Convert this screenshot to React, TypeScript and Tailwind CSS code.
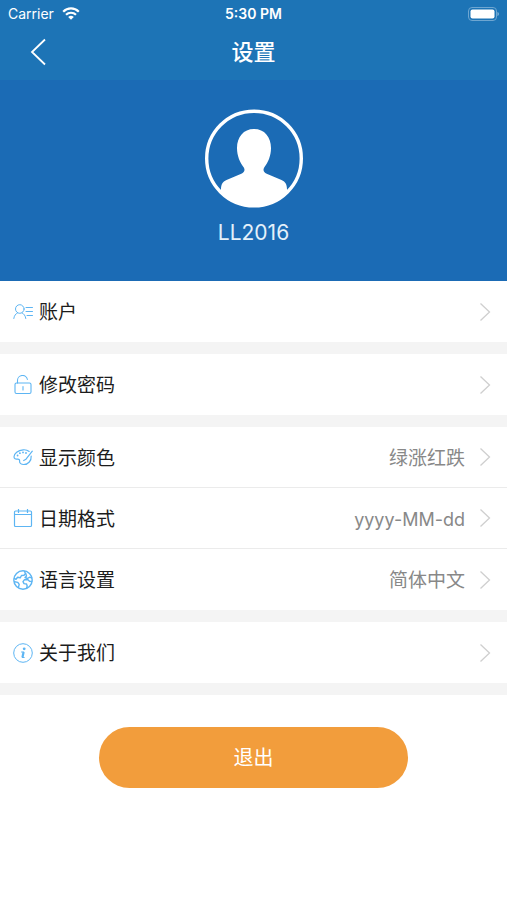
import React from "react";

type Item = {
  label: string;
  value?: string;
  valueClass?: string;
  icon: React.ReactNode;
};

const iconClass = "w-5 h-5 shrink-0 text-[#5db5f3]";

const AccountIcon = () => (
  <svg className={iconClass} viewBox="0 0 20 20" fill="none" stroke="currentColor" strokeWidth="1" strokeLinecap="round">
    <circle cx="6.800" cy="7" r="4.300" />
    <path d="M.8 16.500c.4-2.800 1.800-4.700 3.800-5.700M9 10.800c2 1 3.400 2.900 3.800 5.700" />
    <path d="M13 5.500h6.500M13 9.500h6.500M14 13.500h5.500" />
  </svg>
);

const LockIcon = () => (
  <svg className={iconClass} viewBox="0 0 20 20" fill="none" stroke="currentColor" strokeWidth="1.100" strokeLinecap="round">
    <rect x="2" y="8" width="16" height="10.500" rx="1.500" />
    <path d="M4.500 8V5.700a5 5 0 0 1 9.900-1.200M10 11.500v3.500" />
  </svg>
);

const PaletteIcon = () => (
  <svg className={iconClass} viewBox="0 0 20 20" fill="none" stroke="currentColor" strokeWidth="1.200" strokeLinecap="round" strokeLinejoin="round">
    <path d="M16.200 4.400C14.600 3.200 12.500 2.600 10.200 2.800 5 3.200 1 6.400 1 9.800c0 2 1.700 2.700 3.400 2.300 1.500-.3 2.400.6 2.200 2-.3 2.200 1.600 3.400 4.200 3.400 4.500 0 7.700-3.800 7.400-8.500" />
    <path d="M19.300 4.200 13 12.200l-2.300 1.300" />
    <path d="M4.600 8.400v.1M6.900 6.100v.1M10 5.300v.1M13 6v.1" strokeWidth="1.800" />
  </svg>
);

const CalendarIcon = () => (
  <svg className={iconClass} viewBox="0 0 20 20" fill="none" stroke="currentColor" strokeWidth="1.200">
    <rect x="1.500" y="3" width="17" height="15.500" rx="1" />
    <path d="M1.500 6.500h17M5.500 1v4M14.500 1v4" />
  </svg>
);

const GlobeIcon = () => (
  <svg className={iconClass} viewBox="0 0 20 20" fill="none" stroke="currentColor" strokeWidth="1.400" strokeLinejoin="round" strokeLinecap="round">
    <circle cx="10" cy="10" r="9.200" />
    <path d="M1.300 8.300 3 9.300l1.600-2 2.600.5 1.300-2.300 2.500-.3 1.500-1.700-1-2" />
    <path d="M12.800 3.800l.7 2.200-1.500 1.500 2.500 1 2.300-1.300 2 .8" />
    <path d="M18.800 11.500l-2.300-.3-1.500-1.400-3.500-.2-1.500 2 1 2 2.500.4.700 2-.6 2" />
    <path d="M1.500 11.800l3.300.6 1.400 2-.7 2.800" />
  </svg>
);

const InfoIcon = () => (
  <svg className={iconClass} viewBox="0 0 20 20" fill="none" stroke="currentColor">
    <circle cx="10" cy="10" r="9.300" strokeWidth="1" />
    <circle cx="11.200" cy="5.800" r="1.400" fill="currentColor" stroke="none" />
    <path d="M10.600 9 9.400 14.500" strokeWidth="2.200" />
    <path d="M8.500 9h2.200M9.400 14.500h1.800" strokeWidth="1" strokeLinecap="round" />
  </svg>
);

const groups: Item[][] = [
  [{ label: "账户", icon: <AccountIcon /> }],
  [{ label: "修改密码", icon: <LockIcon /> }],
  [
    { label: "显示颜色", value: "绿涨红跌", icon: <PaletteIcon /> },
    { label: "日期格式", value: "yyyy-MM-dd", valueClass: "text-lg", icon: <CalendarIcon /> },
    { label: "语言设置", value: "简体中文", icon: <GlobeIcon /> },
  ],
  [{ label: "关于我们", icon: <InfoIcon /> }],
];

const StatusBar = () => (
  <div className="grid grid-cols-3 items-center h-7 px-2 text-sm">
    <div className="flex items-center gap-2">
      <span>Carrier</span>
      <svg className="w-[18px] h-[14px]" viewBox="0 0 18 14" fill="none" stroke="currentColor" strokeWidth="2.200">
        <path d="M1.200 4.700a11 11 0 0 1 15.600 0M4 7.800a7.100 7.100 0 0 1 10 0" />
        <path d="M9 12.800 6.200 10a4 4 0 0 1 5.600 0z" fill="currentColor" stroke="none" />
      </svg>
    </div>
    <span className="text-center font-semibold">5:30 PM</span>
    <svg className="w-8 h-[14px] justify-self-end" viewBox="0 0 32 14" fill="none">
      <rect x="1.500" y=".5" width="28" height="13" rx="3.500" stroke="#6ea6d1" />
      <rect x="3.500" y="2.500" width="24" height="9" rx="2" fill="#fff" />
      <path d="M30.500 5v4c.8-.3 1.300-1 1.300-2s-.5-1.700-1.300-2z" fill="#8fbbdc" />
    </svg>
  </div>
);

const Row = ({ item }: { item: Item }) => (
  <button type="button" className="flex items-center w-full h-[61px] pl-[13px] pr-4 bg-white text-left text-[19px]">
    {item.icon}
    <span className="ml-[6px] pt-1 text-[#1c1c1c]">{item.label}</span>
    <span className={`ml-auto pt-1 text-[#888888] ${item.valueClass ?? ""}`}>{item.value}</span>
    <svg className="w-3 h-5 ml-[14px] shrink-0" viewBox="0 0 12 20" fill="none" stroke="#cfcfcf" strokeWidth="1.300">
      <path d="M1.500 1.500 10.500 10l-9 8.500" />
    </svg>
  </button>
);

const App = () => {
  return (
    <div className="min-h-screen bg-white font-['Inter','Noto_Sans_CJK_SC',sans-serif]">
      <header className="bg-[#1d74b6] text-white">
        <StatusBar />
        <div className="grid grid-cols-3 items-center h-[52px] px-7 pb-1">
          <button type="button" aria-label="返回" className="justify-self-start">
            <svg className="w-5 h-7" viewBox="0 0 20 28" fill="none" stroke="currentColor" strokeWidth="1.800">
              <path d="M17 1.500 4 14l13 12.500" />
            </svg>
          </button>
          <h1 className="text-[22px] leading-[30px] font-medium text-center">设置</h1>
        </div>
      </header>

      <section className="flex flex-col items-center h-[201px] pt-7 bg-[#1b6bb5] text-white">
        <svg className="w-[100px] h-[100px]" viewBox="0 0 100 100">
          <defs>
            <clipPath id="avatar">
              <circle cx="50" cy="50.500" r="48" />
            </clipPath>
          </defs>
          <path
            clipPath="url(#avatar)"
            fill="#fff"
            d="M50 21c-10.500 0-17 8-17 19 0 8 3 14.500 6.800 19.500 1.500 2.500.5 5-2.500 6.200L22.500 72c-4 1.700-5.500 4.500-5.500 9.500v19h66v-19c0-5-1.500-7.800-5.500-9.500L62.700 65.700c-3-1.200-4-3.700-2.500-6.200C64 54.500 67 48 67 40c0-11-6.500-19-17-19z"
          />
          <circle cx="50" cy="50.500" r="47.300" fill="none" stroke="#fff" strokeWidth="3.400" />
        </svg>
        <p className="mt-[10px] text-[21px] leading-[30px] text-[#e4f0fa]">LL2016</p>
      </section>

      <main>
        {groups.map((group, index) => (
          <div key={index} className="border-b-12 border-[#f4f4f4] divide-y divide-[#ebebeb]">
            {group.map((item) => (
              <Row key={item.label} item={item} />
            ))}
          </div>
        ))}

        <div className="flex justify-center pt-8">
          <button type="button" className="w-[61%] h-[61px] rounded-full bg-[#f29d3c] text-white text-[20px]">
            退出
          </button>
        </div>
      </main>
    </div>
  );
};

export default App;
